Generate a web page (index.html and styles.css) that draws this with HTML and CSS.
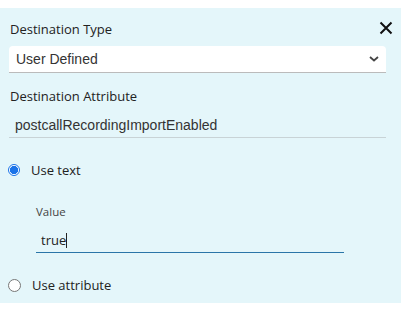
FILE: index.html
```html
<!DOCTYPE html>
<html lang="en">
<head>
  <meta charset="UTF-8">
  <title>Destination</title>
  <link rel="stylesheet" href="styles.css">
</head>
<body>
  <div class="panel">
    <div class="head">
      <span class="label">Destination Type</span>
      <button class="close" aria-label="Close">
        <svg width="14" height="14" viewBox="0 0 14 14"><path d="M1.5 1.5 L12.5 12.5 M12.5 1.5 L1.5 12.5" stroke="#111" stroke-width="2" fill="none"/></svg>
      </button>
    </div>
    <div class="select">
      <span>User Defined</span>
      <svg width="10" height="6" viewBox="0 0 10 6"><path d="M1 1 L5 4.5 L9 1" stroke="#444" stroke-width="1.8" fill="none"/></svg>
    </div>

    <div class="label attr-label">Destination Attribute</div>
    <div class="field">postcallRecordingImportEnabled</div>

    <div class="radio-row first">
      <span class="radio on"></span>
      <span>Use text</span>
    </div>

    <div class="value">
      <div class="value-label">Value</div>
      <div class="value-input">true<span class="caret"></span></div>
    </div>

    <div class="radio-row">
      <span class="radio"></span>
      <span>Use attribute</span>
    </div>
  </div>
</body>
</html>
```

FILE: styles.css
```css
body {
  margin: 0;
  padding-top: 8px;
  background: #fff;
  font-family: "Open Sans", Arial, sans-serif;
  color: #222;
}
.panel {
  width: 401px;
  height: 295px;
  box-sizing: border-box;
  background: #e4f6fa;
  padding: 11px 15px 0 9px;
}
.head {
  display: flex;
  justify-content: space-between;
  align-items: center;
  padding-left: 1px;
  height: 20px;
}
.label {
  font-size: 13px;
  font-weight: 500;
  color: #222;
}
.close {
  border: none;
  background: none;
  padding: 0;
  margin-right: -7px;
  margin-top: -2px;
  display: flex;
}
.select {
  margin-top: 7px;
  height: 26px;
  background: #fff;
  border-radius: 4px 4px 0 0;
  border-bottom: 1px solid #bbb;
  display: flex;
  align-items: center;
  justify-content: space-between;
  padding: 0 7px 0 7px;
  font-family: "Liberation Sans", Arial, sans-serif;
  font-size: 14px;
  color: #333;
}
.attr-label {
  margin-top: 14px;
  padding-left: 1px;
}
.field {
  margin-top: 11px;
  height: 21px;
  line-height: 18px;
  padding-left: 6px;
  font-family: "Liberation Sans", Arial, sans-serif;
  font-size: 14px;
  color: #333;
  border-bottom: 1px solid #c8d3d6;
}
.radio-row {
  display: flex;
  align-items: center;
  gap: 11px;
  font-size: 13px;
  font-weight: 500;
  color: #222;
}
.radio-row.first {
  margin-top: 23px;
}
.radio {
  width: 11px;
  height: 11px;
  margin-left: -1px;
  border-radius: 50%;
  border: 1px solid #777;
  background: #fff;
  box-sizing: content-box;
}
.radio.on {
  border-color: #1a73e8;
  background: radial-gradient(circle, #1a73e8 0 3.8px, #fff 4.4px);
  border-width: 1.5px;
  width: 10px;
  height: 10px;
}
.value {
  margin: 25px 0 0 27px;
  width: 308px;
}
.value-label {
  font-size: 11.5px;
  color: #444;
}
.value-input {
  margin-top: 12px;
  padding-left: 5px;
  height: 21px;
  line-height: 18px;
  font-size: 13px;
  color: #222;
  border-bottom: 1.5px solid #2a75a8;
}
.caret {
  display: inline-block;
  width: 1px;
  height: 15px;
  background: #222;
  vertical-align: -3px;
}
.value + .radio-row {
  margin-top: 23px;
}
```
